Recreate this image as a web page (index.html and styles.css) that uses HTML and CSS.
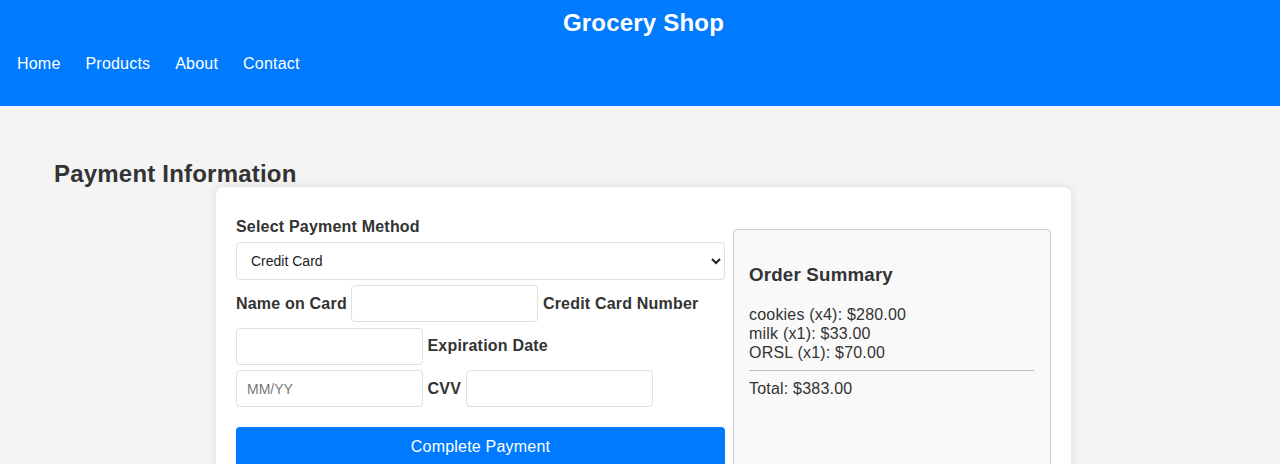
FILE: index.html
```html
<!DOCTYPE html>
<html lang="en">
<head>
<meta charset="utf-8">
<title>Grocery Shop - Payment</title>
<link rel="stylesheet" href="styles.css">
</head>
<body>
<header class="site-header">
  <h1 class="site-title">Grocery Shop</h1>
  <nav class="site-nav">
    <a href="#">Home</a>
    <a href="#">Products</a>
    <a href="#">About</a>
    <a href="#">Contact</a>
  </nav>
</header>
<main class="page">
  <h2 class="page-title">Payment Information</h2>
  <section class="card">
    <form class="pay-form">
      <label class="field-label block" for="method">Select Payment Method</label>
      <select id="method" class="select">
        <option>Credit Card</option>
        <option>PayPal</option>
      </select>
      <div class="fields">
        <label class="field-label" for="name">Name on Card</label>
        <input id="name" class="input" type="text">
        <label class="field-label" for="number">Credit Card Number</label>
        <input id="number" class="input" type="text">
        <label class="field-label" for="exp">Expiration Date</label>
        <input id="exp" class="input" type="text" placeholder="MM/YY">
        <label class="field-label" for="cvv">CVV</label>
        <input id="cvv" class="input" type="text">
      </div>
      <button type="button" class="pay-btn">Complete Payment</button>
    </form>
    <aside class="summary">
      <h3 class="summary-title">Order Summary</h3>
      <ul class="summary-list">
        <li>cookies (x4): $280.00</li>
        <li>milk (x1): $33.00</li>
        <li>ORSL (x1): $70.00</li>
      </ul>
      <hr class="summary-rule">
      <p class="summary-total">Total: $383.00</p>
    </aside>
  </section>
</main>
</body>
</html>
```
FILE: styles.css
```css
* { box-sizing: border-box; }
html, body { margin: 0; }
body {
  font-family: "Liberation Sans", Arial, sans-serif;
  background: #f4f4f4;
  color: #333;
  font-size: 16px;
  letter-spacing: 0.2px;
}
.site-header {
  background: #007bff;
  color: #fff;
  height: 106px;
  padding-top: 9px;
}
.site-title {
  margin: 0;
  padding-left: 7px;
  text-align: center;
  font-size: 24px;
  line-height: 28px;
  font-weight: bold;
}
.site-nav {
  display: flex;
  gap: 25px;
  padding-left: 17px;
  margin-top: 18px;
  line-height: 18px;
}
.site-nav a {
  color: #fff;
  text-decoration: none;
  font-size: 16px;
}
.page {
  padding: 54px 0 0 7px;
}
.page-title {
  margin: 0 0 0 47px;
  font-size: 24px;
  line-height: 27px;
  font-weight: bold;
  color: #333;
}
.card {
  width: 855px;
  margin: 0 auto;
  background: #fff;
  border-radius: 8px;
  box-shadow: 0 0 10px rgba(0,0,0,0.1);
  padding: 20px;
  display: flex;
  gap: 8px;
  align-items: flex-start;
  min-height: 300px;
}
.pay-form {
  width: 489px;
  padding-top: 11px;
}
.field-label {
  font-weight: bold;
  font-size: 16px;
  line-height: 18px;
}
.field-label.block { display: block; }
.select {
  display: block;
  width: 100%;
  height: 38px;
  margin-top: 6px;
  padding: 0 6px 0 10px;
  font-family: "Liberation Sans", Arial, sans-serif;
  font-size: 14px;
  color: #222;
  border: 1px solid #e0e0e0;
  border-radius: 4px;
  background: #fff;
}
.fields {
  display: flex;
  flex-wrap: wrap;
  align-items: center;
  column-gap: 4.5px;
  row-gap: 5.5px;
  margin-top: 5px;
}
.input {
  width: 187px;
  height: 37px;
  padding: 0 10px;
  font-family: "Liberation Sans", Arial, sans-serif;
  font-size: 14px;
  border: 1px solid #e0e0e0;
  border-radius: 4px;
  background: #fff;
}
.input::placeholder { color: #777; }
.pay-btn {
  display: block;
  width: 100%;
  height: 40px;
  margin-top: 20px;
  background: #007bff;
  color: #fff;
  border: 0;
  border-radius: 4px;
  font-family: "Liberation Sans", Arial, sans-serif;
  font-size: 16px;
  letter-spacing: 0.2px;
}
.summary {
  width: 318px;
  margin-top: 22px;
  min-height: 260px;
  background: #f9f9f9;
  border: 1px solid #ccc;
  border-radius: 4px;
  padding: 16px 16px 16px 15px;
}
.summary-title {
  margin: 18px 0 19px;
  font-size: 18.72px;
  line-height: 22px;
  font-weight: bold;
}
.summary-list {
  list-style: none;
  margin: 0;
  padding: 0;
  line-height: 19px;
}
.summary-rule {
  border: 0;
  border-top: 1px solid #bbb;
  margin: 8px 0;
}
.summary-total {
  margin: 0;
  line-height: 19px;
}
```
